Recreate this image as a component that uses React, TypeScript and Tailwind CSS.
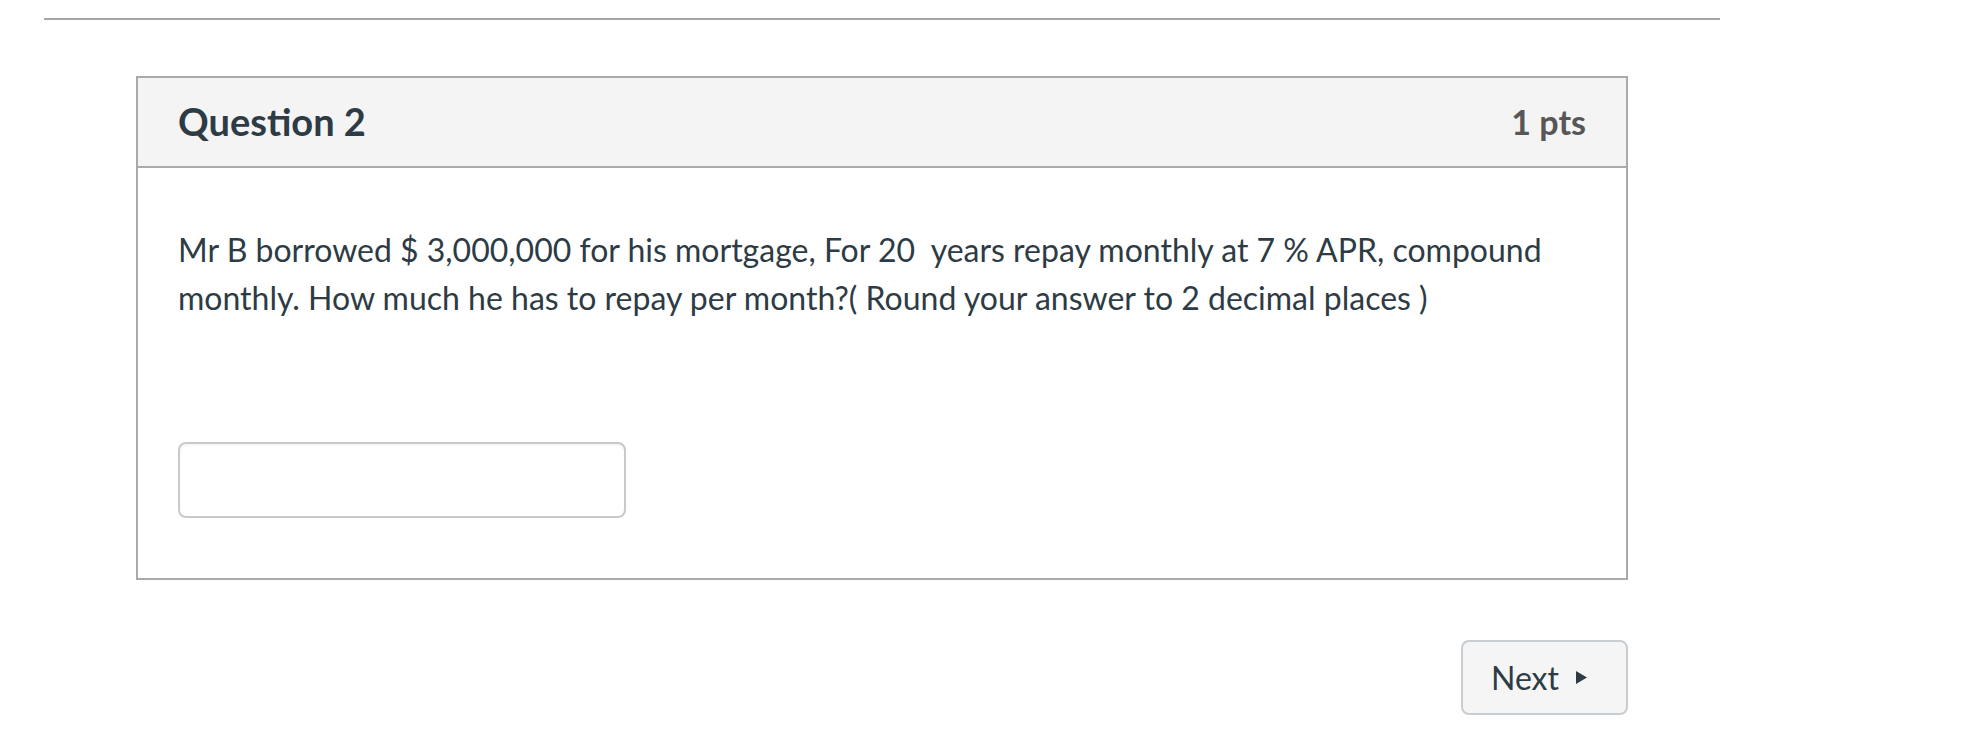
export default function App() {
  return (
    <main className="min-h-screen bg-white font-['Lato','Open_Sans',sans-serif] text-[#2d3b45]">
      <div className="ml-[44px] w-[1676px] pt-[18px]">
        <hr className="border-0 border-t-2 border-[#a6a6a6]" />

        <section className="mx-[92px] mt-[56px] border-2 border-[#aaaaaa]">
          <header className="flex h-[90px] items-center justify-between border-b-2 border-[#aaaaaa] bg-[#f4f4f4] px-[40px]">
            <h2 className="text-[38px] leading-[1.2] font-bold">Question 2</h2>
            <span className="text-[34px] leading-[1.2] font-bold text-[#575757]">
              1 pts
            </span>
          </header>

          <div className="px-[40px] pt-[58px] pb-[60px]">
            <p className="text-[32px] leading-[48px]">
              Mr B borrowed $ 3,000,000 for his mortgage, For 20{"\u00a0"} years repay
              monthly at 7 % APR, compound monthly. How much he has to repay per
              month?( Round your answer to 2 decimal places )
            </p>
            <input
              type="text"
              className="mt-[120px] block h-[76px] w-[448px] rounded-[8px] border-2 border-[#c9c9c9] bg-white px-3 text-[32px] shadow-[inset_0_2px_2px_rgba(0,0,0,0.04)] outline-none"
            />
          </div>
        </section>

        <div className="mx-[92px] mt-[60px] flex justify-end">
          <button
            type="button"
            className="flex h-[75px] w-[167px] items-center gap-[17px] rounded-[8px] border-2 border-[#c7cdd1] bg-[#f5f5f5] pl-[28px] text-[32px] text-[#2d3b45]"
          >
            Next
            <svg width="11" height="13" viewBox="0 0 11 13" aria-hidden="true">
              <path d="M0 0 L11 6.5 L0 13 Z" fill="#2d3b45" />
            </svg>
          </button>
        </div>
      </div>
    </main>
  );
}
